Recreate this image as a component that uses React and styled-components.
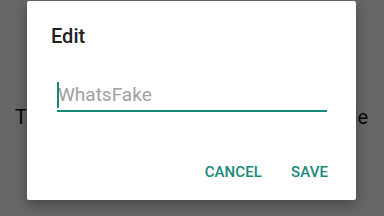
import React from 'react';
import styled, { createGlobalStyle } from 'styled-components';

const GlobalStyle = createGlobalStyle`
  html, body {
    margin: 0;
    padding: 0;
    width: 384px;
    height: 216px;
    overflow: hidden;
    font-family: Roboto, "Liberation Sans", sans-serif;
  }
`;

const Screen = styled.div`
  position: relative;
  width: 384px;
  height: 216px;
  background: #ffffff;
  overflow: hidden;
`;

const SettingRow = styled.div`
  display: flex;
  justify-content: space-between;
  padding: 105px 16px 0 15px;
  font-size: 20px;
  line-height: 24px;
  color: #111;
`;

const Scrim = styled.div`
  position: absolute;
  inset: 0;
  background: rgba(0, 0, 0, 0.596);
  display: flex;
  justify-content: flex-start;
  align-items: flex-start;
  padding: 1px 0 0 27px;
`;

const Dialog = styled.div`
  width: 329px;
  box-sizing: border-box;
  background: #fff;
  border-radius: 2px;
  padding: 23px 24px 18px;
  box-shadow: 0 5px 14px rgba(0, 0, 0, 0.32);
  display: flex;
  flex-direction: column;
`;

const Title = styled.h2`
  margin: 0;
  font-size: 20px;
  line-height: 24px;
  font-weight: 500;
  color: #212121;
`;

const Field = styled.label`
  position: relative;
  display: block;
  margin: 34px 5px 0 6px;
  padding-bottom: 2px;
  border-bottom: 2px solid #168a78;
`;

const Caret = styled.span`
  position: absolute;
  left: 0;
  top: 0;
  width: 2px;
  height: 26px;
  background: #168a78;
`;

const Input = styled.input`
  display: block;
  width: 100%;
  box-sizing: border-box;
  border: none;
  outline: none;
  padding: 0 0 0 1px;
  margin: 0;
  font-family: inherit;
  font-size: 19px;
  line-height: 26px;
  height: 26px;
  color: #212121;
  background: transparent;

  &::placeholder {
    color: #a0a0a0;
  }
`;

const Actions = styled.div`
  display: flex;
  justify-content: flex-end;
  gap: 29px;
  margin-top: 50px;
  padding-right: 4px;
`;

const TextButton = styled.button`
  border: none;
  background: none;
  padding: 0;
  font-family: inherit;
  font-size: 15px;
  line-height: 20px;
  font-weight: 500;
  letter-spacing: 0.1px;
  color: #168a78;
  cursor: pointer;
`;

const App = () => {
    return (
        <Screen>
            <GlobalStyle />
            <SettingRow>
                <span>Type</span>
                <span>Profile</span>
            </SettingRow>
            <Scrim>
                <Dialog>
                    <Title>Edit</Title>
                    <Field>
                        <Input placeholder="WhatsFake" />
                        <Caret />
                    </Field>
                    <Actions>
                        <TextButton>CANCEL</TextButton>
                        <TextButton>SAVE</TextButton>
                    </Actions>
                </Dialog>
            </Scrim>
        </Screen>
    );
};

export default App;
